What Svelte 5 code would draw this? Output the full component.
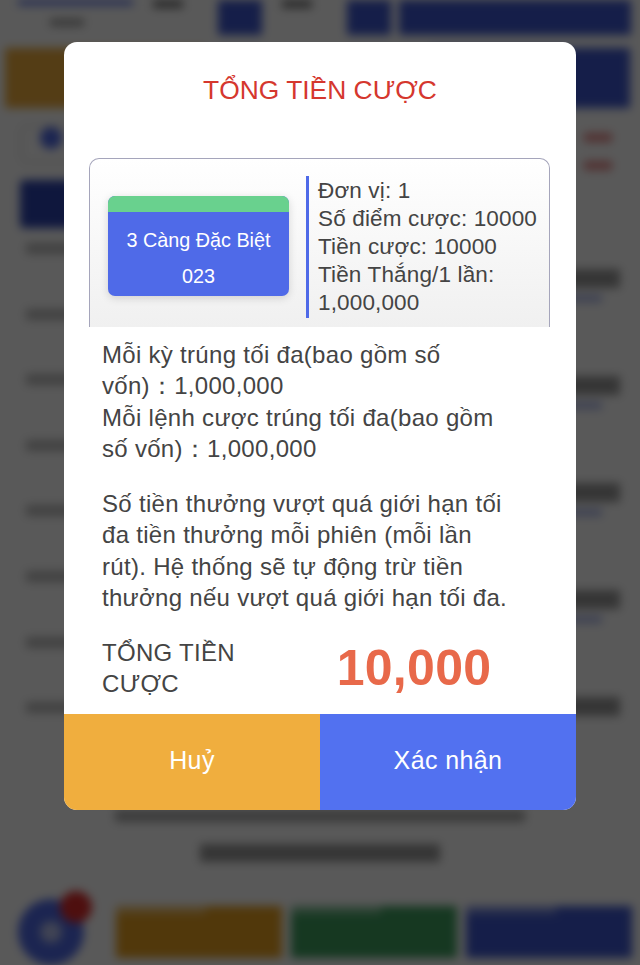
<script>
  const names = [0, 1, 2, 3, 4, 5, 6, 7];
  const values = [true, true, true, true, false];
</script>

<div class="page">
  <div class="backdrop" aria-hidden="true">
    <div class="top">
      <div class="top-left"><span class="line-blue"></span><span class="line-dark"></span></div>
      <span class="num"></span>
      <span class="square"></span>
      <span class="num"></span>
      <span class="square"></span>
      <span class="top-btn"></span>
    </div>
    <div class="bar">
      <span class="bar-yellow"></span>
      <span class="bar-blue"></span>
    </div>
    <div class="tabs">
      <span class="pill"><span class="dot"></span></span>
      <span class="reds"><i></i><i></i></span>
    </div>
    <div class="tab-btn"></div>
    <div class="rows">
      <div class="names">
        {#each names as n}
          <span class="row-name"></span>
        {/each}
      </div>
      <div class="values">
        {#each values as note}
          <span class="row-val">
            <i class="val-dark"></i>
            {#if note}<i class="val-blue"></i>{/if}
          </span>
        {/each}
      </div>
    </div>
    <div class="sums">
      <span class="sum-a"></span>
      <span class="sum-b"></span>
    </div>
    <div class="foot">
      <div class="cart"><span class="cart-in"></span><span class="badge"></span></div>
      <span class="foot-btn yellow"><i></i></span>
      <span class="foot-btn green"><i></i></span>
      <span class="foot-btn blue"><i></i></span>
    </div>
  </div>
  <div class="shade"></div>

  <div class="modal">
    <h2>TỔNG TIỀN CƯỢC</h2>
    <div class="content">
      <div class="card">
        <div class="ticket">
          <div class="ticket-top"></div>
          <div class="ticket-body">
            <p>3 Càng Đặc Biệt</p>
            <p>023</p>
          </div>
        </div>
        <div class="info">
          <div>Đơn vị: 1</div>
          <div>Số điểm cược: 10000</div>
          <div>Tiền cược: 10000</div>
          <div>Tiền Thắng/1 lần: 1,000,000</div>
        </div>
      </div>
      <div class="limits">
        <div>Mỗi kỳ trúng tối đa(bao gồm số vốn)：1,000,000</div>
        <div>Mỗi lệnh cược trúng tối đa(bao gồm số vốn)：1,000,000</div>
      </div>
      <p class="warn">Số tiền thưởng vượt quá giới hạn tối đa tiền thưởng mỗi phiên (mỗi lần rút). Hệ thống sẽ tự động trừ tiền thưởng nếu vượt quá giới hạn tối đa.</p>
      <div class="total">
        <span class="total-label">TỔNG TIỀN CƯỢC</span>
        <span class="total-num">10,000</span>
      </div>
    </div>
    <div class="actions">
      <button class="cancel">Huỷ</button>
      <button class="ok">Xác nhận</button>
    </div>
  </div>
</div>

<style>
  :global(body) {
    margin: 0;
    font-family: "Liberation Sans", Arial, sans-serif;
  }

  .page {
    position: relative;
    width: 640px;
    height: 965px;
    overflow: hidden;
    background: #fff;
  }

  /* blurred page behind the dialog */
  .backdrop {
    height: 965px;
    box-sizing: border-box;
    display: flex;
    flex-direction: column;
    filter: blur(5px);
    background: #fff;
  }
  .backdrop span, .backdrop i { display: block; }

  .top {
    flex: none;
    height: 35px;
    margin-bottom: 13px;
    display: flex;
    align-items: flex-start;
    padding-left: 18px;
  }
  .top-left { width: 115px; }
  .line-blue { height: 5px; background: #4f6ae8; }
  .line-dark { width: 34px; height: 7px; margin: 14px 0 0 32px; background: #999; }
  .num { flex: none; width: 30px; height: 8px; margin: 0 35px 0 20px; background: #777; }
  .square { width: 44px; height: 35px; background: #3e58d0; }
  .top-btn { width: 232px; height: 35px; margin-left: 8px; background: #3e58d0; }

  .bar { flex: none; height: 60px; display: flex; justify-content: space-between; padding: 0 10px 0 5px; }
  .bar-yellow { width: 200px; background: #f0ae3e; }
  .bar-blue { width: 200px; background: #3e58d0; }

  .tabs {
    flex: none;
    height: 72px;
    display: flex;
    justify-content: space-between;
    align-items: center;
    padding: 0 28px 0 20px;
  }
  .pill {
    width: 90px;
    height: 38px;
    display: flex;
    align-items: center;
    padding-left: 18px;
    box-sizing: border-box;
    border: 2px solid #ddd;
    border-radius: 6px;
  }
  .dot { width: 22px; height: 22px; border-radius: 50%; background: #4f6ae8; }
  .reds { margin-top: 14px; }
  .reds i { width: 28px; height: 9px; margin: 19px 0; background: #e68a8a; }

  .tab-btn { flex: none; width: 90px; height: 48px; margin-left: 20px; border-radius: 4px; background: #2d44b0; }

  .rows {
    flex: none;
    display: flex;
    justify-content: space-between;
    padding: 15px 20px 0 26px;
  }
  .names { display: flex; flex-direction: column; gap: 54.6px; }
  .row-name { width: 60px; height: 11px; background: #bbb; }
  .values { display: flex; flex-direction: column; gap: 73px; margin-top: 26px; }
  .row-val { width: 80px; height: 34px; }
  .val-dark { height: 19px; background: #999; }
  .val-blue { height: 7px; margin-top: 7px; width: 62px; background: #a9b4e8; }

  .sums { flex: none; margin-top: 79px; display: flex; flex-direction: column; align-items: center; gap: 22px; }
  .sum-a { width: 410px; height: 12px; background: #aaa; }
  .sum-b { width: 240px; height: 18px; background: #999; }

  .foot { flex: none; margin-top: 37px; display: flex; align-items: center; padding-left: 18px; gap: 9px; }
  .cart {
    position: relative;
    width: 66px;
    height: 66px;
    margin-right: 23px;
    border-radius: 50%;
    background: #4f6ae8;
    display: flex;
    align-items: center;
    justify-content: center;
  }
  .cart-in { width: 22px; height: 22px; border-radius: 50%; background: #b8c2f0; }
  .badge {
    position: absolute;
    top: -8px;
    right: -8px;
    width: 32px;
    height: 32px;
    border-radius: 50%;
    background: #e02c2c;
  }
  .foot-btn {
    width: 166px;
    height: 52px;
    display: flex;
    align-items: center;
    justify-content: center;
  }
  .foot-btn i { width: 90px; height: 8px; background: rgba(255, 255, 255, 0.35); }
  .yellow { background: #e8a020; }
  .green { background: #3fa060; }
  .blue { background: #3e58d0; }

  .shade {
    position: absolute;
    inset: 0;
    background: rgba(0, 0, 0, 0.65);
  }

  /* dialog */
  .modal {
    position: absolute;
    left: 64px;
    top: 42px;
    width: 512px;
    height: 768px;
    display: flex;
    flex-direction: column;
    overflow: hidden;
    border-radius: 13px;
    background: #fff;
    color: #444;
  }
  h2 {
    margin: 0;
    padding-top: 30px;
    height: 86px;
    box-sizing: border-box;
    text-align: center;
    font-size: 26.4px;
    line-height: 36px;
    font-weight: 400;
    color: #d5372e;
  }
  .content {
    flex: 1;
    min-height: 0;
    overflow: hidden;
    padding: 30px 26px 0 25px;
    font-size: 24px;
    letter-spacing: 0.3px;
  }
  .card {
    height: 169px;
    box-sizing: border-box;
    display: flex;
    align-items: center;
    gap: 17px;
    padding: 0 6px 0 18px;
    border: 1.5px solid #a5a5bb;
    border-bottom: 0;
    border-radius: 10px 10px 0 0;
    background: linear-gradient(#fff, #f0f0f0);
  }
  .ticket {
    flex: none;
    width: 181px;
    height: 100px;
    margin-top: 5px;
    overflow: hidden;
    border-radius: 7px;
    background: #4f6ae8;
    box-shadow: 0 2px 8px rgba(0, 0, 0, 0.15);
  }
  .ticket-top { height: 16px; background: #69d18e; }
  .ticket-body { text-align: center; color: #fff; font-size: 19.8px; letter-spacing: 0; }
  .ticket-body p { margin: 0; height: 36px; line-height: 36px; }
  .ticket-body p:first-child { margin-top: 10px; }
  .info {
    flex: 1;
    align-self: flex-start;
    margin-top: 17px;
    padding: 1px 0 1px 9px;
    border-left: 3px solid #4f6ae8;
    font-size: 22.5px;
    line-height: 28px;
    letter-spacing: 0.15px;
  }
  .limits { margin-top: 12px; padding: 0 38px 0 13px; line-height: 31.3px; }
  .warn { margin: 24px 0 0; padding: 0 38px 0 13px; line-height: 31.3px; }
  .total { display: flex; align-items: center; margin-top: 24px; padding-left: 13px; }
  .total-label { width: 150px; line-height: 31px; }
  .total-num {
    flex: 1;
    padding-left: 26px;
    text-align: center;
    font-size: 50px;
    font-weight: 700;
    color: #e8694a;
  }

  .actions { flex: none; display: flex; height: 96px; }
  button {
    flex: 1;
    border: 0;
    padding: 0 0 3px;
    font: inherit;
    font-size: 25px;
    letter-spacing: 0.4px;
    color: #fff;
  }
  .cancel { background: #f0ae3e; }
  .ok { background: #5271f0; }
</style>
